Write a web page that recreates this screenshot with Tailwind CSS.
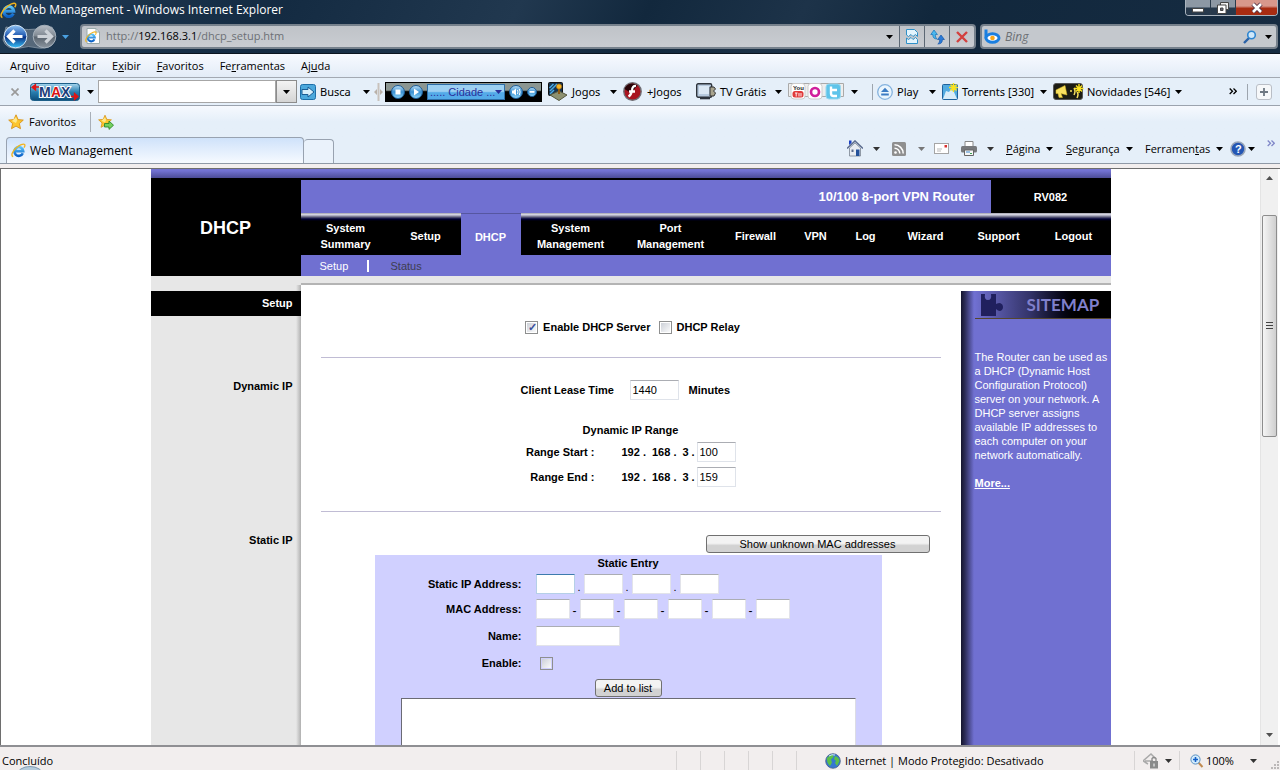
<!DOCTYPE html>
<html lang="pt-BR">
<head>
<meta charset="utf-8">
<title>Web Management - Windows Internet Explorer</title>
<script src="https://cdn.jsdelivr.net/npm/@tailwindcss/browser@4"></script>
</head>
<body class="h-screen flex flex-col overflow-hidden bg-[#f2eeee] font-['Open_Sans','Noto_Sans',sans-serif] text-[11px] leading-4 text-black">

<svg class="absolute size-0" aria-hidden="true">
  <defs>
    <linearGradient id="gBlue" x1="0" y1="0" x2="0" y2="1"><stop offset="0" stop-color="#8fc3f5"/><stop offset=".48" stop-color="#1e57b0"/><stop offset=".52" stop-color="#0b2f80"/><stop offset="1" stop-color="#36c0f8"/></linearGradient>
    <linearGradient id="gGray" x1="0" y1="0" x2="0" y2="1"><stop offset="0" stop-color="#b8bec6"/><stop offset=".48" stop-color="#7e8791"/><stop offset=".52" stop-color="#59636e"/><stop offset="1" stop-color="#8b959f"/></linearGradient>
    <linearGradient id="gIe" x1="0" y1="0" x2="0" y2="1"><stop offset="0" stop-color="#5cc4f8"/><stop offset="1" stop-color="#0c62c8"/></linearGradient>
    <linearGradient id="gOrb" x1="0" y1="0" x2="0" y2="1"><stop offset="0" stop-color="#bfe2f8"/><stop offset=".5" stop-color="#3a8fd0"/><stop offset="1" stop-color="#8fd8fc"/></linearGradient>
    <linearGradient id="gMax" x1="0" y1="0" x2="0" y2="1"><stop offset="0" stop-color="#a8d8f0"/><stop offset=".5" stop-color="#2a7fb0"/><stop offset="1" stop-color="#0e4c78"/></linearGradient>
    <symbol id="ie" viewBox="0 0 16 16">
      <path d="M12.600 11A4.700 4.700 0 1 1 13 8.600H4.500" fill="none" stroke="url(#gIe)" stroke-width="2.800"/>
      <path d="M2.300 14.600C-.4 13.600 1.400 9 5 5.600 8.800 2 13.600.2 14.600 1.800c.6 1-.2 2.400-.8 3.200" fill="none" stroke="#f2b41e" stroke-width="1.400"/>
    </symbol>
    <symbol id="caret" viewBox="0 0 7 4"><path d="M0 0h7L3.500 4z" fill="currentColor"/></symbol>
    <symbol id="star" viewBox="0 0 16 16"><path d="M8 .8l2.100 4.800 5.200.5-3.900 3.500 1.100 5.100L8 12.100l-4.500 2.600 1.100-5.100L.7 6.100l5.200-.5z" fill="#fcc62e" stroke="#d8921a" stroke-width=".9"/><path d="M8 3l1.200 3.200L8 9 4 7z" fill="#ffe88a"/></symbol>
  </defs>
</svg>

<!-- Title bar and address row -->
<header class="shrink-0 bg-[linear-gradient(115deg,#1f3a54_0%,#142b42_22%,#21384f_40%,#12283d_50%,#1d3349_62%,#11273c_72%,#162c42_100%)] border-b border-[#0b1520]">
  <div class="flex h-5 items-center text-white">
    <svg class="size-[17px]"><use href="#ie"/></svg>
    <h1 class="ml-1 flex-1 text-xs">Web Management - Windows Internet Explorer</h1>
    <div class="mr-0.5 flex h-4 self-start overflow-hidden rounded-b border border-t-0 border-[#aab4be]">
      <button aria-label="Minimizar" class="flex w-[25px] items-center justify-center border-r border-[#2a3b4c] bg-linear-to-b from-[#8d98a4] from-45% to-[#27394c] to-55%"><svg class="h-3 w-3" viewBox="0 0 12 12"><rect x=".5" y="6.500" width="11" height="3.500" fill="#fff" stroke="#444"/></svg></button>
      <button aria-label="Restaurar" class="flex w-[25px] items-center justify-center border-r border-[#2a3b4c] bg-linear-to-b from-[#8d98a4] from-45% to-[#27394c] to-55%"><svg class="size-3" viewBox="0 0 12 12"><path d="M3.500.5h8v7h-8z" fill="#eee" stroke="#444"/><path d="M.5 3h8.500v8.500H.5z" fill="#fff" stroke="#444"/><path d="M3.500 6h2.500v2.500H3.500z" fill="#667" stroke="#444"/></svg></button>
      <button aria-label="Fechar" class="flex w-[41px] items-center justify-center bg-linear-to-b from-[#d8988c] from-40% to-[#a82c12] to-55%"><svg class="size-3" viewBox="0 0 12 12"><path d="M2 2l8 8M10 2l-8 8" stroke="#534" stroke-width="4.500"/><path d="M2 2l8 8M10 2l-8 8" stroke="#fff" stroke-width="2.600"/></svg></button>
    </div>
  </div>
  <div class="flex h-[33px] items-start pt-1 pr-0.5">
    <div class="flex w-20 items-center">
      <svg class="h-[26px] w-[58px]" viewBox="0 0 58 26">
        <path d="M6 3q22 5 46 0 5 8 0 18-5 4-14 3-10-3-18 0Q6 26 3 16z" fill="#56687a" stroke="#8c9aa8" stroke-width=".8"/>
        <circle cx="15.500" cy="12.500" r="11.300" fill="url(#gBlue)" stroke="#d5e6f5"/>
        <circle cx="44.500" cy="12.500" r="11.300" fill="url(#gGray)" stroke="#a5b0bb"/>
        <path d="M14.500 6.500l-6 6 6 6M9.500 12.500h13" fill="none" stroke="#fff" stroke-width="3.200"/>
        <path d="M45.500 6.500l6 6-6 6M50.500 12.500h-13" fill="none" stroke="#cdd2d8" stroke-width="3.200"/>
      </svg>
      <svg class="ml-1 h-1 w-[7px] text-[#4aa0e0]"><use href="#caret"/></svg>
    </div>
    <div class="flex h-[25px] flex-1 rounded-sm border-2 border-[#76818c] bg-linear-to-b from-[#bfc3c8] to-[#c9ccd1]">
      <svg class="mt-0.5 ml-[3px] size-4" viewBox="0 0 16 16"><path d="M2 .5h9l3.500 3.500v11.500H2z" fill="#fff" stroke="#9aa"/><path d="M11 .5V4h3.500" fill="none" stroke="#9aa"/><use href="#ie" x="0" y="3" width="12" height="12"/></svg>
      <div role="textbox" aria-label="Endereço" contenteditable="true" spellcheck="false" class="flex-1 pt-0.5 pl-[5px] text-[#6c7075] outline-none">http://<span class="text-black">192.168.3.1</span>/dhcp_setup.htm</div>
      <button aria-label="Lista de endereços" class="flex w-5 items-center justify-center"><svg class="h-1 w-[7px]"><use href="#caret"/></svg></button>
      <button aria-label="Modo de compatibilidade" class="flex w-[25px] items-center justify-center border-l border-[#5d6874]"><svg class="h-[15px] w-3" viewBox="0 0 12 15"><path d="M.5.500h8l3 3v4l-2-2-2.500 2-2-2-2.500 2-2-1.500z" fill="#e2f4fd" stroke="#2e90c8"/><path d="M.5 14.500V9l2 1.500 2.500-2 2 2 2.500-2 2 2v4z" fill="#e2f4fd" stroke="#2e90c8"/></svg></button>
      <button aria-label="Atualizar" class="flex w-[25px] items-center justify-center border-l border-[#5d6874]"><svg class="h-4 w-[15px]" viewBox="0 0 15 16"><path d="M4 1L.8 5.500h2c0 3 1.200 4.500 4.400 4.500C5.700 9 5.200 7.500 5.400 5.500h2z" fill="#4bb8ee" stroke="#1470b8" stroke-width=".7"/><path d="M11 6L7.600 10.500h2c.2 2-.3 3.500-1.800 4.500 3.200 0 4.600-1.500 4.600-4.500h2z" fill="#2b7bd8" stroke="#1556a8" stroke-width=".7"/></svg></button>
      <button aria-label="Parar" class="flex w-[25px] items-center justify-center border-l border-[#5d6874]"><svg class="size-3" viewBox="0 0 12 12"><path d="M1 1l10 10M11 1L1 11" stroke="#d3403e" stroke-width="2.400"/></svg></button>
    </div>
    <div class="ml-1 flex h-[25px] w-[298px] items-center rounded-sm border-2 border-[#76818c] bg-[#c4c8cd] pr-1">
      <svg class="ml-0.5 h-[15px] w-[17px]" viewBox="0 0 17 15"><path d="M2 .5v9" stroke="#1a7fe0" stroke-width="3"/><ellipse cx="8.500" cy="9" rx="6.500" ry="4.300" fill="#fff" stroke="#1a7fe0" stroke-width="3"/><circle cx="8.500" cy="9" r="2.300" fill="#f7a71b"/></svg>
      <input aria-label="Pesquisar no Bing" placeholder="Bing" class="ml-1 min-w-0 flex-1 text-xs italic outline-none placeholder:text-[#6c7075]">
      <button aria-label="Pesquisar"><svg class="mr-2 size-3.5" viewBox="0 0 14 14"><path d="M6 8l-5 5" stroke="#2a62a8" stroke-width="2.400"/><circle cx="8.500" cy="5" r="3.800" fill="#cfe8fa" stroke="#2f86d0" stroke-width="1.600"/></svg></button>
      <button aria-label="Opções de pesquisa"><svg class="h-1 w-[7px]"><use href="#caret"/></svg></button>
    </div>
  </div>
</header>

<!-- Menu bar -->
<nav class="flex h-6 shrink-0 items-center gap-4 border-b border-[#a3a9b2] bg-linear-to-b from-[#f7faff] to-[#e3ecf7] pl-2.5">
  <a href="#">Ar<u>q</u>uivo</a><a href="#"><u>E</u>ditar</a><a href="#">E<u>x</u>ibir</a><a href="#"><u>F</u>avoritos</a><a href="#">Fe<u>r</u>ramentas</a><a href="#">Aj<u>u</u>da</a>
</nav>

<!-- Add-on toolbar -->
<div class="flex h-7 shrink-0 items-center border-b border-[#9ba3ae] bg-[#e5eff9] font-['Noto_Sans',sans-serif]">
  <button aria-label="Fechar barra" class="flex w-[30px] justify-center"><svg class="size-2" viewBox="0 0 8 8"><path d="M.5.500l7 7M7.500.500l-7 7" stroke="#9a9a9a" stroke-width="1.700"/></svg></button>
  <button aria-label="MAX" class="flex w-[68px] items-center gap-[7px]">
    <svg class="h-[18px] w-[50px]" viewBox="0 0 50 18"><rect x=".5" y=".5" width="49" height="17" rx="3" fill="url(#gMax)" stroke="#1d5f88"/><text x="9" y="14" font-family="Liberation Sans" font-weight="bold" font-size="14" fill="#1d3c78" stroke="#fff" stroke-width="2" paint-order="stroke">M</text><text x="21" y="14" font-family="Liberation Sans" font-weight="bold" font-size="14" fill="#d81414" stroke="#fff" stroke-width="2" paint-order="stroke">A</text><text x="31" y="14" font-family="Liberation Sans" font-weight="bold" font-size="14" fill="#1d3c78" stroke="#fff" stroke-width="2" paint-order="stroke">X</text><path d="M9 4H5M5.500 1.500v5.500L2 4.300zM41 13.500h4M44.500 10.500V16.500L48 13.500z" fill="#e01414" stroke="#e01414" stroke-width="1.300"/></svg>
    <svg class="h-1 w-[7px]"><use href="#caret"/></svg>
  </button>
  <input aria-label="Busca" class="h-[23px] w-[178px] border border-[#a6a6a6] bg-white px-1 outline-none">
  <button aria-label="Histórico de busca" class="flex h-[23px] w-[21px] items-center justify-center border border-[#8c8c8c] bg-linear-to-b from-[#f4f4f4] to-[#d4d4d4]"><svg class="h-1 w-[7px]"><use href="#caret"/></svg></button>
  <button class="ml-[3px] flex w-[70px] items-center">
    <svg class="mr-1 size-4" viewBox="0 0 16 16"><rect x=".5" y=".5" width="15" height="15" rx="2" fill="#4ba8dc" stroke="#1d6ea8"/><path d="M2 5.500h6V3l6 5-6 5v-2.500H2z" fill="#d8effb" stroke="#1a5c94"/></svg>Busca
    <svg class="ml-auto h-1 w-[7px]"><use href="#caret"/></svg>
  </button>
  <svg class="mr-0.5 ml-1 h-[18px] w-[9px]" viewBox="0 0 9 18"><path d="M4.500 0v18" stroke="#c9c2bc" stroke-width="2"/><path d="M3 6v6L0 9zM6 6v6l3-3z" fill="#b9b1a9"/></svg>
  <div class="flex h-5 w-[157px] items-center gap-1 border border-black bg-linear-to-b from-[#8b9692] from-40% to-black to-50% px-[5px]">
    <button aria-label="Parar rádio"><svg class="size-3.5" viewBox="0 0 14 14"><circle cx="7" cy="7" r="6.500" fill="url(#gOrb)" stroke="#1b5a94"/><path d="M4.500 4.500h5v5h-5z" fill="#fff"/></svg></button>
    <button aria-label="Tocar rádio"><svg class="size-3.5" viewBox="0 0 14 14"><circle cx="7" cy="7" r="6.500" fill="url(#gOrb)" stroke="#1b5a94"/><path d="M5 3.500L10 7l-5 3.500z" fill="#fff"/></svg></button>
    <button class="flex h-4 flex-1 items-center justify-between border border-[#2d6ea8] bg-linear-to-b from-[#9cd0f2] from-45% to-[#53aae8] to-55% px-0.5 font-['Liberation_Sans',sans-serif] whitespace-nowrap text-[#2a2f9a]">..... Cidade ...<svg class="h-1 w-[7px]"><use href="#caret"/></svg></button>
    <button aria-label="Volume"><svg class="size-3.5" viewBox="0 0 14 14"><circle cx="7" cy="7" r="6.500" fill="url(#gOrb)" stroke="#1b5a94"/><path d="M3 5.500h1.500L7 3.500v7L4.500 8.500H3z" fill="#fff"/><path d="M8.500 5q1 2 0 4M10.300 4q1.700 3 0 6" fill="none" stroke="#fff"/></svg></button>
    <button aria-label="Recolher rádio"><svg class="size-2.5" viewBox="0 0 10 10"><circle cx="5" cy="5" r="4.500" fill="url(#gOrb)" stroke="#1b5a94"/><path d="M2.500 4h5v1.800h-5z" fill="#fff"/></svg></button>
  </div>
  <button class="ml-1.5 flex w-[69px] items-center">
    <svg class="mr-1 h-[19px] w-5" viewBox="0 0 20 19"><rect x=".5" y=".5" width="14" height="13" rx="1" fill="#173450" stroke="#111"/><path d="M2 9l7-7M1.500 6l4-4M2 12l4-4" stroke="#4cabe4" stroke-width="1.500"/><path d="M2 13l9-4 8 4-8 5.500z" fill="#8d9170" stroke="#55583f"/><path d="M11 12V6" stroke="#8c5a14" stroke-width="2"/><circle cx="11" cy="4.500" r="2.600" fill="#f6b625" stroke="#a66a10" stroke-width=".7"/></svg>Jogos
    <svg class="ml-auto h-1 w-[7px]"><use href="#caret"/></svg>
  </button>
  <button class="ml-1.5 flex w-[73px] items-center gap-[5px]">
    <svg class="size-[19px]" viewBox="0 0 19 19"><circle cx="9.500" cy="9.500" r="8.700" fill="#a91420" stroke="#6e6e74" stroke-width="1.400"/><path d="M1.500 7a8 8 0 0 1 13-3.500L8 11z" fill="#2a0508"/><path d="M13 4q-3.500-.5-4 4-.7 5-3.500 6.500M6 9.500h6" fill="none" stroke="#fff" stroke-width="2.300"/></svg>+Jogos
  </button>
  <button class="flex w-[86px] items-center">
    <svg class="mr-1 h-[17px] w-5" viewBox="0 0 20 17"><rect x=".7" y=".7" width="15" height="13.500" rx="1.500" fill="#b6c9dd" stroke="#2e343c" stroke-width="1.400"/><path d="M3 3h10v8H3z" fill="#dbe8f4"/><path d="M14 4h4l1.500 2-2 2 2 2-1.500 3h-4z" fill="#a9a48e" stroke="#333"/><path d="M4 15.500h10" stroke="#2e343c" stroke-width="1.600"/></svg>TV Grátis
    <svg class="ml-auto h-1 w-[7px]"><use href="#caret"/></svg>
  </button>
  <button aria-label="Redes sociais" class="ml-1.5 flex w-[70px] items-center justify-between">
    <svg class="h-[17px] w-[57px]" viewBox="0 0 57 17"><path d="M.5.500h55v13h-55z" fill="#eee" stroke="#aaa"/><rect x="3" y=".5" width="14" height="15.500" rx="3" fill="#fff" stroke="#ccc"/><text x="5" y="7" font-family="Liberation Sans" font-weight="bold" font-size="6" fill="#222">You</text><rect x="4.500" y="8" width="11" height="6.500" rx="2.500" fill="#e03a3a"/><path d="M7 10h2.500M8.200 10v3.500M11 10v3.500M13 10v3.500" stroke="#fff" stroke-width=".9"/><rect x="20" y=".5" width="14" height="15.500" rx="3" fill="#fff" stroke="#ccc"/><circle cx="27" cy="9" r="4" fill="none" stroke="#d0209c" stroke-width="2.700"/><rect x="38" y="1" width="14.500" height="15" rx="3" fill="#5fc4ea" stroke="#9bd9f0"/><path d="M43 3.500v7q0 2.500 2.500 2.500H49M43 7h6" fill="none" stroke="#fff" stroke-width="2.400"/></svg>
    <svg class="h-1 w-[7px]"><use href="#caret"/></svg>
  </button>
  <span class="mr-1 ml-[14px] h-4 w-px bg-[#9da5ae]"></span>
  <button class="flex w-[59px] items-center">
    <svg class="mr-1 size-4" viewBox="0 0 16 16"><circle cx="8" cy="8" r="7.300" fill="#eaf5fd" stroke="#84b2de" stroke-width="1.300"/><path d="M8 3.800l4 4.200H4zM4.200 9.500h7.600v2H4.200z" fill="#3c7cc4"/></svg>Play
    <svg class="ml-auto h-1 w-[7px]"><use href="#caret"/></svg>
  </button>
  <button class="ml-1.5 flex w-[105px] items-center whitespace-nowrap">
    <svg class="mr-1 h-[17px] w-4" viewBox="0 0 16 17"><rect x=".5" y="1.500" width="15" height="15" rx="1" fill="#52abe0" stroke="#20639c"/><path d="M1 16L4 8l3 1 2-3 3 3 3 7z" fill="#d9edf8"/><path d="M11.500 0v9M7 4.500h9M8.500 1.500l6 6M14.500 1.500l-6 6" stroke="#fae21e" stroke-width="1.500"/></svg>Torrents [330]
    <svg class="ml-auto h-1 w-[7px]"><use href="#caret"/></svg>
  </button>
  <button class="ml-1.5 flex w-[129px] items-center whitespace-nowrap">
    <svg class="mr-[3px] h-[17px] w-[31px]" viewBox="0 0 31 17"><rect x=".5" y=".5" width="29" height="16" rx="2.500" fill="#1c1c14" stroke="#555"/><path d="M3 7l9-4.500L14 12 8 10.500l1.500 4H6L5 10.500H3z" fill="#f8e060" stroke="#d8b820" stroke-width=".5"/><path d="M17 8h2M21 5q2 3 0 7M24 9q2 2 0 6" stroke="#f8e060" stroke-width="1.500" fill="none"/><path d="M26 1v9M21.500 5.500h9M23 2.500l6 6M29 2.500l-6 6" stroke="#fae21e" stroke-width="1.400"/></svg>Novidades [546]
    <svg class="ml-auto h-1 w-[7px]"><use href="#caret"/></svg>
  </button>
  <button aria-label="Mais botões" class="ml-auto"><svg class="h-[7px] w-2" viewBox="0 0 8 7"><path d="M.7.500l2.800 2.700L.7 6M4.500.500l2.800 2.700L4.500 6" fill="none" stroke="#000" stroke-width="1.300"/></svg></button>
  <span class="mr-2 ml-2.5 h-4 w-px bg-[#9da5ae]"></span>
  <button aria-label="Adicionar" class="mr-2 flex size-4 items-center justify-center rounded-[3px] border border-[#b9bec6] bg-[#f6f8fa]"><svg class="size-2" viewBox="0 0 8 8"><path d="M4 0v8M0 4h8" stroke="#6d7782" stroke-width="1.800"/></svg></button>
</div>

<!-- Favorites -->
<div class="flex h-[31px] shrink-0 items-center bg-linear-to-b from-[#f6f9fe] to-[#e5eff9] to-50% pl-2">
  <button class="flex w-[82px] items-center gap-[5px]"><svg class="size-4"><use href="#star"/></svg>Favoritos</button>
  <span class="h-5 w-px bg-[#a8afb8]"></span>
  <button aria-label="Adicionar a favoritos" class="ml-[7px]"><svg class="size-4" viewBox="0 0 16 16"><use href="#star" width="14" height="15"/><path d="M6.500 9.500H11V7l4.500 4.200L11 15.400V13H6.500z" fill="#74d060" stroke="#2f8a2a" stroke-width=".9"/></svg></button>
</div>

<!-- Tabs and command bar -->
<div class="flex h-[27px] shrink-0 items-end border-b border-[#8f99a6] bg-[#e5eff9] pl-1.5">
  <button class="flex h-[26px] w-[298px] items-center gap-1 rounded-t border border-b-0 border-[#98a2b0] bg-linear-to-b from-[#cfe2fa] to-[#f6faff] pl-1 text-xs"><svg class="size-[15px]"><use href="#ie"/></svg>Web Management</button>
  <button aria-label="Nova guia" class="h-6 w-[30px] rounded-t border border-b-0 border-l-0 border-[#98a2b0] bg-[#eaf2fb]"></button>
  <div class="mb-1.5 ml-auto flex items-center">
    <button aria-label="Página inicial" class="flex w-[45px] items-center gap-2.5"><svg class="h-[17px] w-4" viewBox="0 0 16 17"><path d="M2.500 8v8h11V8L8 3z" fill="#e8ecf2" stroke="#7a8492" stroke-width=".8"/><path d="M0 8.500L8 1l8 7.500" fill="none" stroke="#5c6c8e" stroke-width="1.600"/><path d="M2 5V.5h2.500V3" fill="#1b3fc0"/><path d="M9 9.500h3.500V16H9z" fill="#24519a"/><path d="M4.500 9.500h2v2.500h-2z" fill="#5c6c8e"/></svg><svg class="h-1 w-[7px] text-[#333]"><use href="#caret"/></svg></button>
    <button aria-label="Feeds" class="flex w-[42px] items-center gap-3"><svg class="size-3.5 shrink-0" viewBox="0 0 14 14"><rect width="14" height="14" rx="1.500" fill="#8f8f8f"/><circle cx="3.500" cy="10.500" r="1.300" fill="#fff"/><path d="M2.500 6.200a5.300 5.300 0 0 1 5.300 5.300M2.500 2.800a8.700 8.700 0 0 1 8.700 8.700" fill="none" stroke="#fff" stroke-width="1.500"/></svg><svg class="h-1 w-[7px] text-[#777]"><use href="#caret"/></svg></button>
    <button aria-label="Ler email" class="w-[27px]"><svg class="h-[11px] w-[15px]" viewBox="0 0 15 11"><rect x=".5" y=".5" width="14" height="10" fill="#fff" stroke="#a5a5a5"/><path d="M10.500 2h2.500v2.500h-2.500z" fill="#d83030"/><path d="M3 6h5M3 8h4" stroke="#bbb"/></svg></button>
    <button aria-label="Imprimir" class="flex w-[45px] items-center gap-2.5"><svg class="h-[15px] w-4" viewBox="0 0 16 15"><path d="M4 .5h8V6H4z" fill="#fff" stroke="#888"/><rect y="5" width="16" height="6.500" rx="1.500" fill="#77797c"/><path d="M3.500 9h9v5.500h-9z" fill="#f6f6f6" stroke="#666"/><path d="M5 11h4" stroke="#3a88d0"/><path d="M9 12.500h2" stroke="#3aa050"/></svg><svg class="h-1 w-[7px] text-[#333]"><use href="#caret"/></svg></button>
    <button class="flex w-[60px] items-center gap-1.5"><span><u>P</u>ágina</span><svg class="h-1 w-[7px]"><use href="#caret"/></svg></button>
    <button class="flex w-[79px] items-center gap-1.5"><span><u>S</u>egurança</span><svg class="h-1 w-[7px]"><use href="#caret"/></svg></button>
    <button class="flex w-[85px] items-center gap-1.5"><span>Ferramen<u>t</u>as</span><svg class="h-1 w-[7px]"><use href="#caret"/></svg></button>
    <button aria-label="Ajuda" class="flex w-[37px] items-center gap-0.5"><svg class="size-4" viewBox="0 0 16 16"><circle cx="8" cy="8" r="7" fill="#2456b4" stroke="#9aa6b8" stroke-width="1.600"/><text x="5" y="12" font-family="Liberation Sans" font-weight="bold" font-size="11" fill="#fff">?</text></svg><svg class="h-1 w-[7px]"><use href="#caret"/></svg></button>
    <button aria-label="Mais comandos" class="mr-[5px] self-start"><svg class="h-[7px] w-2" viewBox="0 0 8 7"><path d="M.7.500l2.800 2.700L.7 6M4.500.500l2.800 2.700L4.500 6" fill="none" stroke="#7f86c8" stroke-width="1.300"/></svg></button>
  </div>
</div>

<!-- Viewport -->
<div class="mt-1 flex min-h-0 flex-1 border-t border-l border-[#6e6e6e] bg-white font-['Liberation_Sans',Arial,sans-serif] leading-[14px]">
  <main class="min-w-0 flex-1 overflow-hidden">
    <div class="mx-auto w-[960px]">
      <div class="h-[11px] border-b-2 border-black bg-linear-to-b from-[#7272d2] from-20% to-[#4c4c96]"></div>
      <div class="flex">
        <h2 class="flex h-24 w-[150px] items-center justify-center bg-black text-lg font-bold text-white">DHCP</h2>
        <div class="flex-1 font-bold text-white">
          <div class="flex h-[33px] items-center bg-[#7070d1]">
            <div class="flex-1 pr-4 text-right text-[13px]">10/100 8-port VPN Router</div>
            <div class="flex h-full w-[120px] items-center justify-center bg-black">RV082</div>
          </div>
          <nav class="flex h-[42px] bg-[linear-gradient(to_bottom,#8a8a98_0px,#dcdce6_1px,#c8c8d8_2px,#60607c_4px,#000038_6px,#00001c_7px,#000_8px)] text-center leading-4">
            <a href="#" class="flex w-[90px] items-center justify-center pt-1">System<br>Summary</a>
            <a href="#" class="flex w-[70px] items-center justify-center pt-1">Setup</a>
            <a href="#" class="flex w-[60px] items-center justify-center border-t border-[#5656a0] bg-[#7070d1] pt-1">DHCP</a>
            <a href="#" class="flex w-[100px] items-center justify-center pt-1">System<br>Management</a>
            <a href="#" class="flex w-[100px] items-center justify-center pt-1">Port<br>Management</a>
            <a href="#" class="flex w-[70px] items-center justify-center pt-1">Firewall</a>
            <a href="#" class="flex w-[50px] items-center justify-center pt-1">VPN</a>
            <a href="#" class="flex w-[50px] items-center justify-center pt-1">Log</a>
            <a href="#" class="flex w-[70px] items-center justify-center pt-1">Wizard</a>
            <a href="#" class="flex w-[76px] items-center justify-center pt-1">Support</a>
            <a href="#" class="flex w-[74px] items-center justify-center pt-1">Logout</a>
          </nav>
          <div class="flex h-[21px] items-center bg-[#7070d1] pl-[19px] font-normal">
            <a href="#" class="w-[47px]">Setup</a><span class="mr-[22px] h-3 w-0.5 bg-white"></span><a href="#" class="text-[#3e3e50]">Status</a>
          </div>
        </div>
      </div>

      <div class="flex bg-[#e7e7e7]">
        <div class="w-[150px]"></div>
        <div class="h-[9px] flex-1 border-b-2 border-[#b4b4b4]"></div>
      </div>

      <div class="flex bg-[linear-gradient(to_right,#e7e7e7_145px,#b0b0b0_150px,#fff_150px)]">
        <form class="w-[810px] pt-1.5">
          <section class="flex h-[66px]">
            <h3 class="h-[25px] w-[150px] bg-black pt-[5px] pr-2 text-right font-bold text-white">Setup</h3>
            <div class="flex flex-1 items-center justify-center pt-1.5 pl-1 font-bold">
              <input id="srv" type="checkbox" checked class="size-[13px] appearance-none border border-[#8e8f8f] bg-[linear-gradient(135deg,#c8ccd4,#fff)] bg-clip-content p-px after:-mt-[3px] after:ml-px after:block after:leading-[14px] after:text-[#3b4f9c] checked:after:content-['✓']">
              <label for="srv" class="mr-2 ml-[5px]">Enable DHCP Server</label>
              <input id="relay" type="checkbox" class="size-[13px] appearance-none border border-[#8e8f8f] bg-[linear-gradient(135deg,#c8ccd4,#fff)] bg-clip-content p-px">
              <label for="relay" class="ml-[5px]">DHCP Relay</label>
            </div>
          </section>

          <section class="flex">
            <h3 class="w-[150px] pt-[22px] pr-2 text-right font-bold">Dynamic IP</h3>
            <div class="mx-5 h-[154px] flex-1 border-t border-[#c0bcd4] pt-[22px] font-bold">
              <div class="flex items-center pl-[200px]">
                <label for="lease" class="w-[109px]">Client Lease Time</label>
                <input id="lease" value="1440" class="h-5 w-[49px] border border-[#dfe3ea] border-t-[#abadb3] bg-white px-0.5 font-normal">
                <span class="ml-2.5">Minutes</span>
              </div>
              <div class="mt-[23px] text-center">Dynamic IP Range</div>
              <div class="mt-[5px] flex h-5 items-center">
                <label for="rs" class="w-[274px] text-right">Range Start :</label>
                <span class="flex w-[102px] gap-1.5 pl-[27px]"><span>192 .</span><span>168 .</span><span>3 .</span></span>
                <input id="rs" value="100" class="h-5 w-[39px] border border-[#dfe3ea] border-t-[#abadb3] bg-white px-0.5 font-normal">
              </div>
              <div class="mt-[5px] flex h-5 items-center">
                <label for="re" class="w-[274px] text-right">Range End :</label>
                <span class="flex w-[102px] gap-1.5 pl-[27px]"><span>192 .</span><span>168 .</span><span>3 .</span></span>
                <input id="re" value="159" class="h-5 w-[39px] border border-[#dfe3ea] border-t-[#abadb3] bg-white px-0.5 font-normal">
              </div>
            </div>
          </section>

          <section class="flex">
            <h3 class="w-[150px] pt-[22px] pr-2 text-right font-bold">Static IP</h3>
            <div class="mx-5 flex-1 border-t border-[#c0bcd4] pt-[23px]">
              <div class="flex justify-end pr-[11px]">
                <button type="button" class="h-[18px] w-56 rounded-[3px] border border-[#707070] bg-linear-to-b from-[#f3f3f3] from-45% to-[#d2d2d2] to-60% leading-none">Show unknown MAC addresses</button>
              </div>
              <div class="mt-0.5 ml-[54px] w-[507px] bg-[#d0d0ff] font-bold">
                <h4 class="pt-[1px] text-center">Static Entry</h4>
                <div class="mt-1 flex h-5 items-center">
                  <span id="ipl" class="w-[161px] pr-3.5 text-right">Static IP Address:</span>
                  <div class="flex items-end" role="group" aria-labelledby="ipl">
                    <input aria-label="IP 1" class="h-5 w-[39px] border border-[#b5cfe7] border-t-[#3d7bad] bg-white"><span class="w-[9px] text-center font-normal">.</span>
                    <input aria-label="IP 2" class="h-5 w-[39px] border border-[#e2e3ea] border-t-[#abadb3] bg-white"><span class="w-[9px] text-center font-normal">.</span>
                    <input aria-label="IP 3" class="h-5 w-[39px] border border-[#e2e3ea] border-t-[#abadb3] bg-white"><span class="w-[9px] text-center font-normal">.</span>
                    <input aria-label="IP 4" class="h-5 w-[39px] border border-[#e2e3ea] border-t-[#abadb3] bg-white">
                  </div>
                </div>
                <div class="mt-[5px] flex h-5 items-center">
                  <span id="macl" class="w-[161px] pr-3.5 text-right">MAC Address:</span>
                  <div class="flex items-end" role="group" aria-labelledby="macl">
                    <input aria-label="MAC 1" class="h-5 w-[34px] border border-[#e2e3ea] border-t-[#abadb3] bg-white"><span class="w-2.5 text-center text-xs font-normal">-</span>
                    <input aria-label="MAC 2" class="h-5 w-[34px] border border-[#e2e3ea] border-t-[#abadb3] bg-white"><span class="w-2.5 text-center text-xs font-normal">-</span>
                    <input aria-label="MAC 3" class="h-5 w-[34px] border border-[#e2e3ea] border-t-[#abadb3] bg-white"><span class="w-2.5 text-center text-xs font-normal">-</span>
                    <input aria-label="MAC 4" class="h-5 w-[34px] border border-[#e2e3ea] border-t-[#abadb3] bg-white"><span class="w-2.5 text-center text-xs font-normal">-</span>
                    <input aria-label="MAC 5" class="h-5 w-[34px] border border-[#e2e3ea] border-t-[#abadb3] bg-white"><span class="w-2.5 text-center text-xs font-normal">-</span>
                    <input aria-label="MAC 6" class="h-5 w-[34px] border border-[#e2e3ea] border-t-[#abadb3] bg-white">
                  </div>
                </div>
                <div class="mt-[7px] flex h-5 items-center">
                  <label for="nm" class="w-[161px] pr-3.5 text-right">Name:</label>
                  <input id="nm" class="h-5 w-[84px] border border-[#e2e3ea] border-t-[#abadb3] bg-white">
                </div>
                <div class="mt-[7px] flex h-5 items-center">
                  <label for="en" class="w-[165px] pr-[18px] text-right">Enable:</label>
                  <input id="en" type="checkbox" class="size-[13px] appearance-none border border-[#8e8f8f] bg-[linear-gradient(135deg,#c8ccd4,#fff)] bg-clip-content p-px">
                </div>
                <div class="mt-1.5 flex justify-center">
                  <button type="button" class="h-[18px] w-[67px] rounded-[3px] border border-[#707070] bg-linear-to-b from-[#f3f3f3] from-45% to-[#d2d2d2] to-60% leading-none font-normal">Add to list</button>
                </div>
                <select aria-label="Static IP list" size="8" class="mt-px ml-[26px] block h-40 w-[455px] border border-[#dcdce4] border-t-[#6b6b74] border-l-[#6b6b74] bg-white"></select>
              </div>
            </div>
          </section>
        </form>

        <aside class="mt-1.5 w-[150px] bg-[linear-gradient(to_right,#15152e_0px,#2c2c58_4px,#7070d1_13px)] pl-3.5 text-white">
          <div class="flex h-7 items-center border-b border-[#55462e] bg-linear-to-r from-[#7070d1] via-[#34346a] via-40% to-black to-80%">
            <svg class="ml-1.5 h-6 w-[22px]" viewBox="0 0 22 24"><path d="M0 1h4q-1 6 3 6t3-6h5v10q2-1 4-1 3 1 3 4t-3 4q-2 0-4-2v7H0z" fill="#20205e"/></svg>
            <span class="ml-6 font-['Lato',sans-serif] text-[17px] font-bold text-[#8080cc]">SITEMAP</span>
          </div>
          <p class="mt-[31px]">The Router can be used as a DHCP (Dynamic Host Configuration Protocol) server on your network. A DHCP server assigns available IP addresses to each computer on your network automatically.</p>
          <a href="#" class="mt-3.5 block font-bold underline">More...</a>
        </aside>
      </div>
    </div>
  </main>
  <div class="mr-0.5 flex w-[18px] flex-col items-center border-l border-[#e4e4e4] bg-[#f0f0f0]" aria-hidden="true">
    <svg class="mt-[7px] mb-[35px] h-1 w-[7px] rotate-180 text-[#505050]"><use href="#caret"/></svg>
    <div class="flex h-[222px] w-[15px] items-center justify-center rounded-xs border border-[#8d8d8d] bg-linear-to-r from-[#f5f5f5] to-[#cfcfcf]"><svg class="h-2 w-[7px]" viewBox="0 0 7 8"><path d="M0 .5h7M0 3.500h7M0 6.500h7" stroke="#444"/></svg></div>
    <svg class="mt-auto mb-2 h-1 w-[7px] text-[#505050]"><use href="#caret"/></svg>
  </div>
</div>

<!-- Status bar -->
<footer class="relative flex h-[25px] shrink-0 items-center border-t-2 border-[#8f8f93] bg-[#f2eeee] pt-1">
  <span class="ml-0.5 flex-1">Concluído</span>
  <div class="flex h-[19px] divide-x divide-[#d8d5d5] border-l border-[#d8d5d5]"><i class="w-6"></i><i class="w-6"></i><i class="w-6"></i><i class="w-6"></i><i class="w-6"></i><i class="w-6"></i></div>
  <div class="flex w-[313px] items-center gap-1 pl-1"><svg class="size-4" viewBox="0 0 16 16"><circle cx="8" cy="8" r="7.300" fill="#3577d0" stroke="#4a5f88" stroke-width=".8"/><path d="M2 5q3-4 6-3.500L8.500 4 6 6.500l1 3L5 13Q1.500 10 2 5zM10 3q4 1 4.500 5L12 13l-2-3 1-2-2-2z" fill="#5cc048"/><path d="M4 3q3-2 6-1" stroke="#cfe8ff" fill="none"/></svg>Internet | Modo Protegido: Desativado</div>
  <button aria-label="Filtragem" class="flex h-[19px] w-[45px] items-center gap-1.5 border-l border-[#d8d5d5] pl-2"><svg class="size-4" viewBox="0 0 16 16"><path d="M5 11L0 8l8-7 4 4M2 8h8" fill="none" stroke="#a9a9a9" stroke-width="1.500"/><rect x="7" y="8" width="8" height="7.500" fill="#8a8a8a"/><path d="M9 8V5.500q2-2 4 0V8" fill="none" stroke="#8a8a8a" stroke-width="1.300"/><path d="M11 10.500v3" stroke="#fff"/></svg><svg class="h-1 w-[7px] text-[#333]"><use href="#caret"/></svg></button>
  <button class="flex h-[19px] w-[101px] items-center border-l border-[#d8d5d5] pl-2.5"><svg class="mr-0.5 size-3.5" viewBox="0 0 14 14"><path d="M8 8l4.500 5" stroke="#c08a50" stroke-width="2"/><circle cx="5.500" cy="5.500" r="4.600" fill="#d4ecfc" stroke="#5a90c0"/><path d="M5.500 3v5M3 5.500h5" stroke="#1460c8" stroke-width="1.600"/></svg>100%<svg class="ml-4 h-1 w-[7px] text-[#333]"><use href="#caret"/></svg><svg class="ml-auto size-2.5 self-end" viewBox="0 0 10 10"><path d="M7 1h2v2H7zM7 4h2v2H7zM7 7h2v2H7zM4 4h2v2H4zM4 7h2v2H4zM1 7h2v2H1z" fill="#bcb8b8"/></svg></button>
  <svg class="absolute bottom-0 left-[17px] h-1 w-[26px]" viewBox="0 0 26 4"><ellipse cx="13" cy="9" rx="13" ry="8.500" fill="#b4cbdc" stroke="#7f9cb4"/></svg>
</footer>
</body>
</html>
